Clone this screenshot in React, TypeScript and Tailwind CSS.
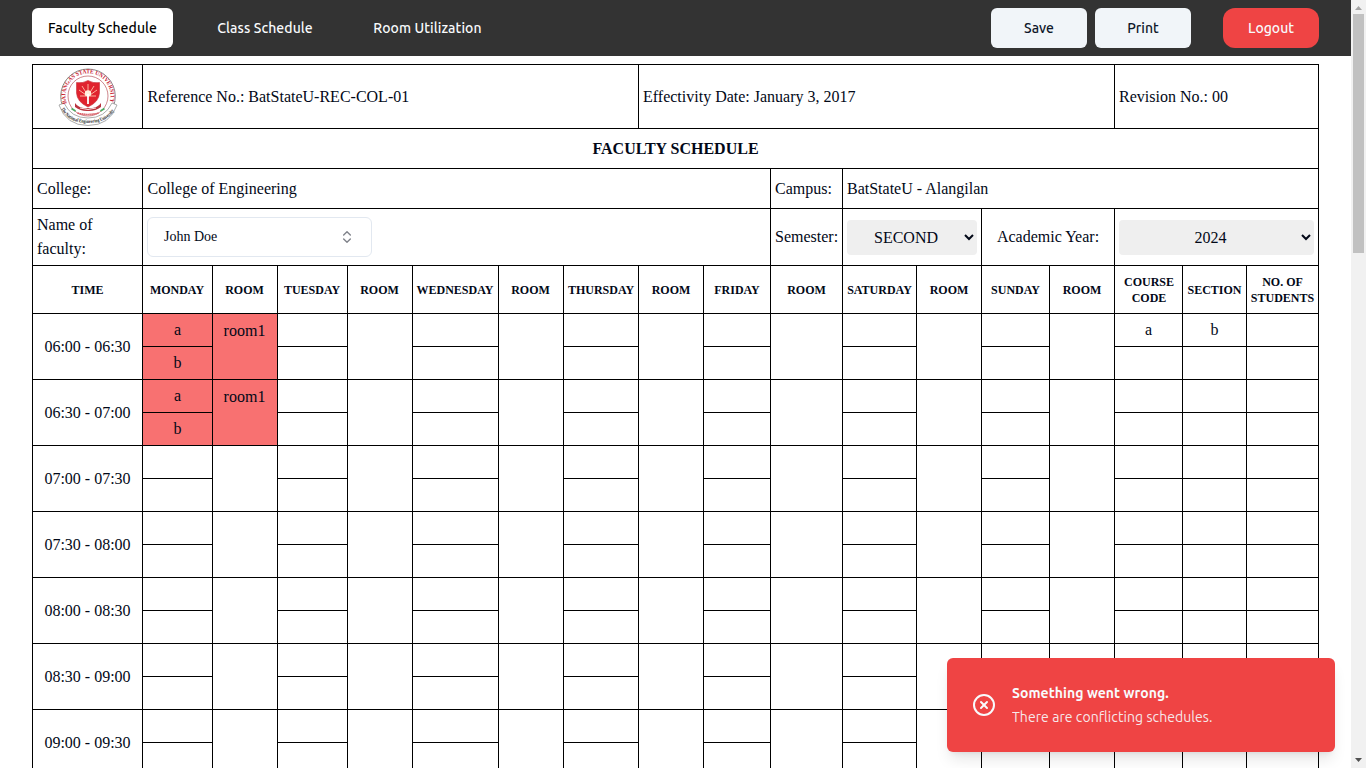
import { CircleX, ChevronsUpDown } from "lucide-react";

const DAYS = ["MONDAY", "TUESDAY", "WEDNESDAY", "THURSDAY", "FRIDAY", "SATURDAY", "SUNDAY"];
const TIMES = [
  "06:00 - 06:30", "06:30 - 07:00", "07:00 - 07:30", "07:30 - 08:00",
  "08:00 - 08:30", "08:30 - 09:00", "09:00 - 09:30",
];

const CELL = "border-r border-b border-black";
const INFO = `${CELL} flex items-center px-1`;
const HEAD = `${CELL} flex items-center justify-center text-center text-xs font-bold`;

function Seal() {
  return (
    <svg viewBox="0 0 60 58" className="h-[58px] w-[60px]">
      <defs>
        <path id="top" d="M8.9 36 A22.6 22.6 0 1 1 51.1 36" />
        <path id="bottom" d="M2.5 39.5 Q9 55 30 55 Q51 55 57.5 39.5" />
      </defs>
      <circle cx="30" cy="28.3" r="27.3" fill="#fff" stroke="#8a8a8a" strokeWidth="1" />
      <circle cx="30" cy="28" r="20" fill="#fff" stroke="#b9545c" strokeWidth="0.7" />
      <path d="M18.5 14.5 Q25 15.5 30 12.5 Q35 15.5 41.5 14.5 V25 Q41 34 30 39 Q19 34 18.5 25Z" fill="#e0232e" stroke="#c4313b" strokeWidth="0.6" />
      <path d="M30 16v9M24 18l5 8M36 18l-5 8M21 22l7 5M39 22l-7 5M22 28h6M38 28h-6" stroke="#ffc2a8" strokeWidth="0.9" />
      <circle cx="30" cy="25.5" r="3.2" fill="#fff0dc" />
      <path d="M29.1 26h1.8v10h-1.8z" fill="#fff" />
      <path d="M17 35 Q21 41 30 40 Q39 41 43 35 L43 39 Q37 43.5 30 43 Q23 43.5 17 39Z" fill="#b9343e" />
      <path d="M22 40 Q30 43 38 40" stroke="#f6dede" strokeWidth="1" fill="none" />
      <path d="M1 37 L6 35 Q13 50 30 50 Q47 50 54 35 L59 37 Q52 57.5 30 57.5 Q8 57.5 1 37Z" fill="#fff" stroke="#8a8a8a" strokeWidth="0.7" />
      <text fontSize="6" fontWeight="bold" fill="#c8202f" fontFamily="Liberation Serif, serif">
        <textPath href="#top" startOffset="0.5" textLength="85" lengthAdjust="spacingAndGlyphs">BATANGAS STATE UNIVERSITY</textPath>
      </text>
      <text fontSize="5.2" fontWeight="bold" fill="#2b2b2b" fontFamily="Liberation Serif, serif">
        <textPath href="#bottom" startOffset="1" textLength="63" lengthAdjust="spacingAndGlyphs">The National Engineering University</textPath>
      </text>
      <path d="M13.5 40.5l4 2.5M46.5 40.5l-4 2.5" stroke="#4caa62" strokeWidth="1.8" />
      <path d="M19.5 45 Q30 48 40.5 45" stroke="#d8505a" strokeWidth="1.7" strokeDasharray="1.4 .6" fill="none" />
    </svg>
  );
}

function Split({ a = "", b = "", red = false }: { a?: string; b?: string; red?: boolean }) {
  const tone = red ? "bg-[#f87171]" : "bg-white";
  return (
    <div className="grid grid-rows-2">
      <div className={`${CELL} ${tone} flex items-center justify-center`}>{a}</div>
      <div className={`${CELL} ${tone} flex items-center justify-center`}>{b}</div>
    </div>
  );
}

function TimeRow({ time, index }: { time: string; index: number }) {
  const conflict = index < 2;
  return (
    <>
      <div className={`${CELL} flex items-center justify-center`}>{time}</div>
      {DAYS.map((day, d) => {
        const red = conflict && d === 0;
        return (
          <div key={day} className="contents">
            <Split red={red} a={red ? "a" : ""} b={red ? "b" : ""} />
            <div className={`${CELL} ${red ? "bg-[#f87171]" : "bg-white"} pt-[5px] pr-px text-center`}>{red ? "room1" : ""}</div>
          </div>
        );
      })}
      <Split a={index === 0 ? "a" : ""} />
      <Split a={index === 0 ? "b" : ""} />
      <Split />
    </>
  );
}

export default function App() {
  return (
    <div className="flex h-[768px] w-[1366px] overflow-hidden bg-white text-[#020817]">
      <div className="flex w-[1351px] flex-col overflow-hidden">
        <nav className="flex h-14 shrink-0 items-center justify-between bg-[#333333] px-8 font-['Ubuntu','Noto_Sans',sans-serif] text-sm font-medium whitespace-nowrap text-[#f8fafc]">
          <div className="flex gap-7 tracking-[0.09px]">
            <button className="h-10 w-[141px] rounded-md bg-white text-black">Faculty Schedule</button>
            <button className="h-10 w-[128px]">Class Schedule</button>
            <button className="h-10 w-[141px]">Room Utilization</button>
          </div>
          <div className="flex gap-2">
            <button className="h-10 w-24 rounded-md bg-[#f1f5f9] text-[#0f172a]">Save</button>
            <button className="h-10 w-24 rounded-md bg-[#f1f5f9] text-[#0f172a]">Print</button>
            <button className="ml-6 h-10 w-24 rounded-xl bg-[#ef4444]">Logout</button>
          </div>
        </nav>

        <main className="flex-1 overflow-hidden px-8 pt-2 font-['Liberation_Serif',serif] text-base">
          <div className="grid w-[1287px] grid-cols-[110px_70px_65px_70px_65px_86px_65px_75px_65px_67px_72px_74px_65px_68px_65px_68px_64px_72px] grid-rows-[64px_40px_40px_57px_48px] auto-rows-[66px] border-t border-l border-black">
            <div className={`${CELL} flex items-center justify-center`}><Seal /></div>
            <div className={`${CELL} col-span-7 flex items-center pl-[4.5px]`}>Reference No.: BatStateU-REC-COL-01</div>
            <div className={`${INFO} col-span-7`}>Effectivity Date: January 3, 2017</div>
            <div className={`${INFO} col-span-3`}>Revision No.: 00</div>

            <div className={`${CELL} col-span-18 flex items-center justify-center font-bold`}>FACULTY SCHEDULE</div>

            <div className={INFO}>College:</div>
            <div className={`${CELL} col-span-9 flex items-center pl-[4.5px]`}>College of Engineering</div>
            <div className={INFO}>Campus:</div>
            <div className={`${INFO} col-span-7`}>BatStateU - Alangilan</div>

            <div className={INFO}><span className="w-16">Name of faculty:</span></div>
            <div className={`${INFO} col-span-9`}>
              <button className="flex h-10 w-[225px] items-center justify-between rounded-md border border-[#e2e8f0] px-4 text-sm">
                John Doe
                <ChevronsUpDown className="h-4 w-4 opacity-50" />
              </button>
            </div>
            <div className={`${INFO} whitespace-nowrap`}>Semester:</div>
            <div className={`${INFO} col-span-2`}>
              <select className="w-full rounded bg-[#efefef] p-2 text-center"><option>SECOND</option></select>
            </div>
            <div className={`${INFO} col-span-2 justify-center`}>Academic Year:</div>
            <div className={`${INFO} col-span-3`}>
              <select className="w-full rounded bg-[#efefef] p-2 text-center"><option>2024</option></select>
            </div>

            <div className={HEAD}>TIME</div>
            {DAYS.map((day, d) => (
              <div key={day} className="contents">
                <div className={`${HEAD} ${d < 3 ? "pr-px" : ""}`}>{day}</div>
                <div className={`${HEAD} ${d < 3 ? "pr-px" : ""}`}>ROOM</div>
              </div>
            ))}
            <div className={`${HEAD} pl-px`}>COURSE<br />CODE</div>
            <div className={HEAD}>SECTION</div>
            <div className={HEAD}>NO. OF<br />STUDENTS</div>

            {TIMES.map((time, i) => <TimeRow key={time} time={time} index={i} />)}
          </div>
        </main>
      </div>

      <div className="flex w-[15px] flex-col items-center justify-between bg-[#f1f1f1]">
        <div className="flex flex-col items-center">
          <svg viewBox="0 0 15 14" className="h-[14px] w-[15px]"><path d="M4 10h7L7.5 6z" fill="#a3a3a3" /></svg>
          <div className="h-[239px] w-[11px] bg-[#c1c1c1]" />
        </div>
        <svg viewBox="0 0 15 14" className="h-[14px] w-[15px]"><path d="M4 4h7L7.5 8z" fill="#505050" /></svg>
      </div>

      <div className="absolute top-[658px] left-[947px] flex h-[94px] w-[388px] items-center rounded-md bg-[#ef4444] pl-[25px] font-['Ubuntu','Noto_Sans',sans-serif] text-sm text-[#f8fafc] shadow-lg">
        <CircleX className="h-6 w-6" />
        <div className="ml-4 grid gap-1">
          <div className="font-bold tracking-[0.05px]">Something went wrong.</div>
          <div className="tracking-[0.07px] opacity-90">There are conflicting schedules.</div>
        </div>
      </div>
    </div>
  );
}
